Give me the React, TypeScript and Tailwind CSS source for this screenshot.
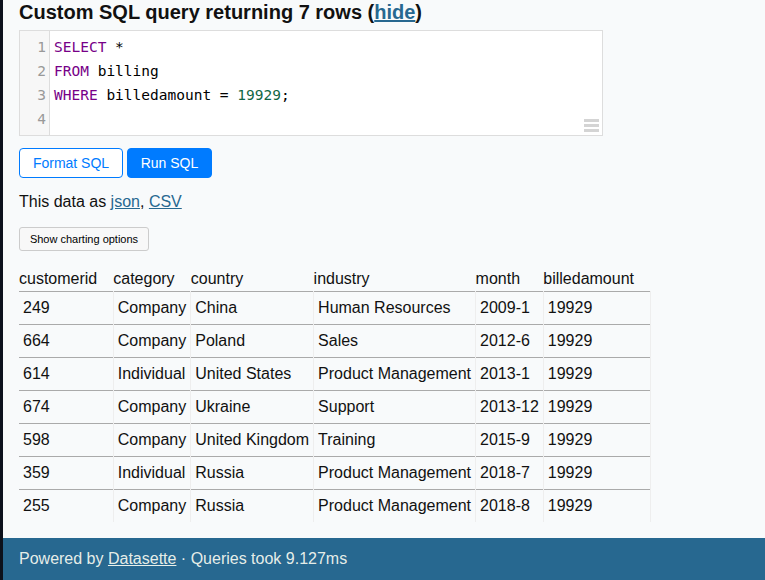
import React from "react";

const rows = [
  ["249", "Company", "China", "Human Resources", "2009-1", "19929"],
  ["664", "Company", "Poland", "Sales", "2012-6", "19929"],
  ["614", "Individual", "United States", "Product Management", "2013-1", "19929"],
  ["674", "Company", "Ukraine", "Support", "2013-12", "19929"],
  ["598", "Company", "United Kingdom", "Training", "2015-9", "19929"],
  ["359", "Individual", "Russia", "Product Management", "2018-7", "19929"],
  ["255", "Company", "Russia", "Product Management", "2018-8", "19929"],
];
const headers = ["customerid", "category", "country", "industry", "month", "billedamount"];

export default function App() {
  return (
    <div className="flex w-[765px] h-[580px] overflow-hidden bg-[#f8fafb] text-[#111] [font-family:'Liberation_Sans',Arial,sans-serif]">
      <div className="w-[3px] shrink-0 bg-[#0c111c]" />
      <div className="flex-1 flex flex-col min-w-0">
        <div className="pl-4 flex-1">
          <h3 className="text-[20px] leading-[26px] font-bold text-[#111] mt-[-1px]">
            Custom SQL query returning 7 rows (
            <a className="text-[#276890] underline" href="#">hide</a>)
          </h3>
          <div className="mt-[5px] w-[584px] h-[106px] border border-[#ddd] bg-white flex relative">
            <div className="w-[30px] bg-[#f7f7f7] border-r border-[#ddd] py-[4px] text-right pr-[3px] text-[#999] text-[14.5px] leading-[24px] [font-family:'DejaVu_Sans_Mono',monospace]">
              <div>1</div>
              <div>2</div>
              <div>3</div>
              <div>4</div>
            </div>
            <div className="py-[4px] pl-[4px] text-[14.5px] leading-[24px] [font-family:'DejaVu_Sans_Mono',monospace] text-black whitespace-pre">
              <div><span className="text-[#708]">SELECT</span> *</div>
              <div><span className="text-[#708]">FROM</span> billing</div>
              <div><span className="text-[#708]">WHERE</span> billedamount = <span className="text-[#164]">19929</span>;</div>
              <div> </div>
            </div>
            <div className="absolute right-[3px] bottom-[3px] flex flex-col gap-[2px]">
              <div className="w-[15px] h-[3px] bg-[#d4d4d4]" />
              <div className="w-[15px] h-[3px] bg-[#d4d4d4]" />
              <div className="w-[15px] h-[3px] bg-[#d4d4d4]" />
            </div>
          </div>
          <div className="mt-[12px] flex gap-[4px]">
            <button className="h-[30px] w-[104px] bg-white border border-[#007bff] rounded-[4px] text-[#007bff] text-[14px]">
              Format SQL
            </button>
            <button className="h-[30px] w-[85px] bg-[#007bff] border border-[#007bff] rounded-[4px] text-white text-[14px]">
              Run SQL
            </button>
          </div>
          <p className="mt-[12px] text-[16px] leading-[24px]">
            This data as <a className="text-[#276890] underline" href="#">json</a>,{" "}
            <a className="text-[#276890] underline" href="#">CSV</a>
          </p>
          <button className="mt-[13px] h-[24px] w-[130px] bg-[#f8f8f8] border border-[#ccc] rounded-[3px] text-[11px] text-black">
            Show charting options
          </button>
          <table className="mt-[16px] border-collapse text-[16px] leading-[24px] text-[#111]">
            <thead>
              <tr>
                {headers.map((h) => (
                  <th key={h} className="text-left font-normal pr-[16px] pl-0 py-0">
                    {h}
                  </th>
                ))}
              </tr>
            </thead>
            <tbody>
              {rows.map((r, i) => (
                <tr key={i}>
                  {r.map((c, j) => (
                    <td key={j} className="border-t border-t-[#aaa] border-r border-r-[#eee] px-[4px] py-[4px] whitespace-nowrap">
                      {c}
                    </td>
                  ))}
                </tr>
              ))}
            </tbody>
          </table>
        </div>
        <div className="mt-[16px] h-[42px] shrink-0 bg-[#276890] pl-4 flex items-center text-[16px] text-[rgba(255,255,244,0.9)]">
          <span>
            Powered by <a className="underline text-[rgba(255,255,244,0.9)]" href="#">Datasette</a> · Queries took 9.127ms
          </span>
        </div>
      </div>
    </div>
  );
}
